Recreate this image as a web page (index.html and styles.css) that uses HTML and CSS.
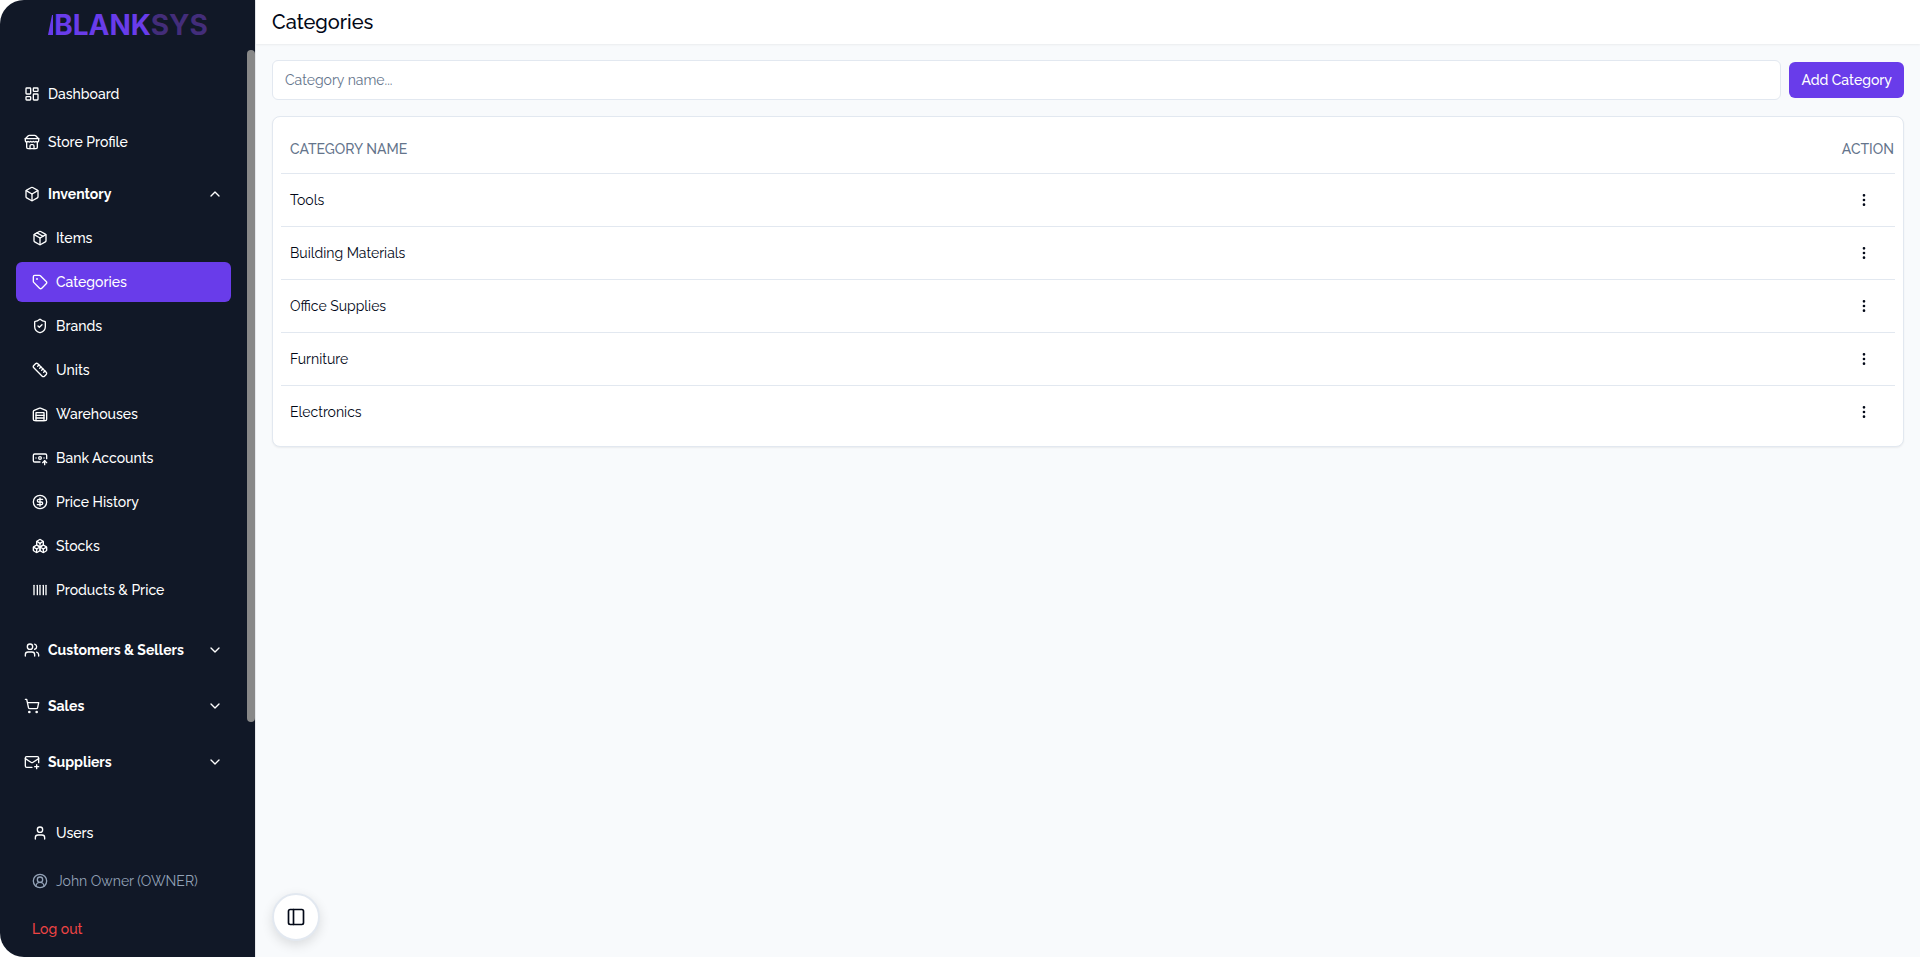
FILE: index.html
```html
<!DOCTYPE html>
<html lang="en">
<head>
    <meta charset="UTF-8">
    <meta name="viewport" content="width=device-width, initial-scale=1.0">
    <title>Categories</title>
    <link rel="stylesheet" href="styles.css">
</head>
<body>
    <div class="layout">
        <aside class="sidebar">
            <div class="logo">
                <svg class="logo-mark" viewBox="0 0 5 20"><path d="M0 20 4 0H5V20Z"/></svg>
                <span>BLANK<span class="logo-dim">SYS</span></span>
            </div>

            <nav class="nav">
                <div class="scroll-thumb"></div>
                <div class="nav-top">
                    <a class="nav-link" href="#">
                        <svg class="icon" viewBox="0 0 24 24"><rect width="7" height="9" x="3" y="3" rx="1"/><rect width="7" height="5" x="14" y="3" rx="1"/><rect width="7" height="9" x="14" y="12" rx="1"/><rect width="7" height="5" x="3" y="16" rx="1"/></svg>
                        Dashboard
                    </a>
                    <a class="nav-link" href="#">
                        <svg class="icon" viewBox="0 0 24 24"><path d="m2 7 4.41-4.41A2 2 0 0 1 7.83 2h8.34a2 2 0 0 1 1.42.59L22 7"/><path d="M4 12v8a2 2 0 0 0 2 2h12a2 2 0 0 0 2-2v-8"/><path d="M15 22v-4a2 2 0 0 0-2-2h-2a2 2 0 0 0-2 2v4"/><path d="M2 7h20"/><path d="M22 7v3a2 2 0 0 1-2 2a2.7 2.7 0 0 1-1.59-.63.7.7 0 0 0-.82 0A2.7 2.7 0 0 1 16 12a2.7 2.7 0 0 1-1.59-.63.7.7 0 0 0-.82 0A2.7 2.7 0 0 1 12 12a2.7 2.7 0 0 1-1.59-.63.7.7 0 0 0-.82 0A2.7 2.7 0 0 1 8 12a2.7 2.7 0 0 1-1.59-.63.7.7 0 0 0-.82 0A2.7 2.7 0 0 1 4 12a2 2 0 0 1-2-2V7"/></svg>
                        Store Profile
                    </a>
                </div>

                <div class="nav-group open">
                    <button class="group-btn" type="button" aria-expanded="true">
                        <svg class="icon" viewBox="0 0 24 24"><path d="M21 8a2 2 0 0 0-1-1.73l-7-4a2 2 0 0 0-2 0l-7 4A2 2 0 0 0 3 8v8a2 2 0 0 0 1 1.73l7 4a2 2 0 0 0 2 0l7-4A2 2 0 0 0 21 16Z"/><path d="m3.3 7 8.7 5 8.7-5"/><path d="M12 22V12"/></svg>
                        <span>Inventory</span>
                        <svg class="icon chevron" viewBox="0 0 24 24"><path d="m18 15-6-6-6 6"/></svg>
                    </button>
                    <div class="sub-nav">
                        <a class="nav-link" href="#">
                            <svg class="icon" viewBox="0 0 24 24"><path d="M11 21.73a2 2 0 0 0 2 0l7-4A2 2 0 0 0 21 16V8a2 2 0 0 0-1-1.73l-7-4a2 2 0 0 0-2 0l-7 4A2 2 0 0 0 3 8v8a2 2 0 0 0 1 1.73z"/><path d="M12 22V12"/><path d="m3.3 7 8.7 5 8.7-5"/><path d="m7.5 4.27 9 5.15"/></svg>
                            Items
                        </a>
                        <a class="nav-link active" href="#">
                            <svg class="icon" viewBox="0 0 24 24"><path d="M12.586 2.586A2 2 0 0 0 11.172 2H4a2 2 0 0 0-2 2v7.172a2 2 0 0 0 .586 1.414l8.704 8.704a2.426 2.426 0 0 0 3.42 0l6.58-6.58a2.426 2.426 0 0 0 0-3.42z"/><circle cx="7.5" cy="7.5" r=".5" fill="currentColor"/></svg>
                            Categories
                        </a>
                        <a class="nav-link" href="#">
                            <svg class="icon" viewBox="0 0 24 24"><path d="M20 13c0 5-3.5 7.5-7.66 8.95a1 1 0 0 1-.67-.01C7.5 20.5 4 18 4 13V6a1 1 0 0 1 1-1c2 0 4.5-1.2 6.24-2.72a1.17 1.17 0 0 1 1.52 0C14.51 3.81 17 5 19 5a1 1 0 0 1 1 1z"/><path d="m9 12 2 2 4-4"/></svg>
                            Brands
                        </a>
                        <a class="nav-link" href="#">
                            <svg class="icon" viewBox="0 0 24 24"><path d="M21.3 15.3a2.4 2.4 0 0 1 0 3.4l-2.6 2.6a2.4 2.4 0 0 1-3.4 0L2.7 8.7a2.41 2.41 0 0 1 0-3.4l2.6-2.6a2.41 2.41 0 0 1 3.4 0Z"/><path d="m14.5 12.5 2-2"/><path d="m11.5 9.5 2-2"/><path d="m8.5 6.5 2-2"/><path d="m17.5 15.5 2-2"/></svg>
                            Units
                        </a>
                        <a class="nav-link" href="#">
                            <svg class="icon" viewBox="0 0 24 24"><path d="M22 8.35V20a2 2 0 0 1-2 2H4a2 2 0 0 1-2-2V8.35A2 2 0 0 1 3.26 6.5l8-3.2a2 2 0 0 1 1.48 0l8 3.2A2 2 0 0 1 22 8.35Z"/><path d="M6 18h12"/><path d="M6 14h12"/><rect width="12" height="12" x="6" y="10"/></svg>
                            Warehouses
                        </a>
                        <a class="nav-link" href="#">
                            <svg class="icon" viewBox="0 0 24 24"><path d="M12 18H4a2 2 0 0 1-2-2V8a2 2 0 0 1 2-2h16a2 2 0 0 1 2 2v5"/><path d="M18 12h.01"/><path d="M19 22v-6"/><path d="m22 19-3-3-3 3"/><path d="M6 12h.01"/><circle cx="12" cy="12" r="2"/></svg>
                            Bank Accounts
                        </a>
                        <a class="nav-link" href="#">
                            <svg class="icon" viewBox="0 0 24 24"><circle cx="12" cy="12" r="10"/><path d="M16 8h-6a2 2 0 1 0 0 4h4a2 2 0 1 1 0 4H8"/><path d="M12 18V6"/></svg>
                            Price History
                        </a>
                        <a class="nav-link" href="#">
                            <svg class="icon" viewBox="0 0 24 24"><path d="M2.97 12.92A2 2 0 0 0 2 14.63v3.24a2 2 0 0 0 .97 1.71l3 1.8a2 2 0 0 0 2.06 0L12 19v-5.5l-5-3-4.03 2.42Z"/><path d="m7 16.5-4.74-2.85"/><path d="m7 16.5 5-3"/><path d="M7 16.5v5.17"/><path d="M12 13.5V19l3.97 2.38a2 2 0 0 0 2.06 0l3-1.8a2 2 0 0 0 .97-1.71v-3.24a2 2 0 0 0-.97-1.71L17 10.5l-5 3Z"/><path d="m17 16.5-5-3"/><path d="m17 16.5 4.74-2.85"/><path d="M17 16.5v5.17"/><path d="M7.97 4.42A2 2 0 0 0 7 6.13v4.37l5 3 5-3V6.13a2 2 0 0 0-.97-1.71l-3-1.8a2 2 0 0 0-2.06 0l-3 1.8Z"/><path d="M12 8 7.26 5.15"/><path d="m12 8 4.74-2.85"/><path d="M12 13.5V8"/></svg>
                            Stocks
                        </a>
                        <a class="nav-link" href="#">
                            <svg class="icon" viewBox="0 0 24 24"><path d="M3 5v14"/><path d="M8 5v14"/><path d="M12 5v14"/><path d="M17 5v14"/><path d="M21 5v14"/></svg>
                            Products &amp; Price
                        </a>
                    </div>
                </div>

                <div class="nav-group">
                    <button class="group-btn" type="button" aria-expanded="false">
                        <svg class="icon" viewBox="0 0 24 24"><path d="M16 21v-2a4 4 0 0 0-4-4H6a4 4 0 0 0-4 4v2"/><circle cx="9" cy="7" r="4"/><path d="M22 21v-2a4 4 0 0 0-3-3.87"/><path d="M16 3.13a4 4 0 0 1 0 7.75"/></svg>
                        <span>Customers &amp; Sellers</span>
                        <svg class="icon chevron" viewBox="0 0 24 24"><path d="m6 9 6 6 6-6"/></svg>
                    </button>
                </div>
                <div class="nav-group">
                    <button class="group-btn" type="button" aria-expanded="false">
                        <svg class="icon" viewBox="0 0 24 24"><circle cx="8" cy="21" r="1"/><circle cx="19" cy="21" r="1"/><path d="M2.05 2.05h2l2.66 12.42a2 2 0 0 0 2 1.58h9.78a2 2 0 0 0 1.95-1.57l1.65-7.43H5.12"/></svg>
                        <span>Sales</span>
                        <svg class="icon chevron" viewBox="0 0 24 24"><path d="m6 9 6 6 6-6"/></svg>
                    </button>
                </div>
                <div class="nav-group">
                    <button class="group-btn" type="button" aria-expanded="false">
                        <svg class="icon" viewBox="0 0 24 24"><path d="M22 13V6a2 2 0 0 0-2-2H4a2 2 0 0 0-2 2v12c0 1.1.9 2 2 2h8"/><path d="m22 7-8.97 5.7a1.94 1.94 0 0 1-2.06 0L2 7"/><path d="M19 16v6"/><path d="M16 19h6"/></svg>
                        <span>Suppliers</span>
                        <svg class="icon chevron" viewBox="0 0 24 24"><path d="m6 9 6 6 6-6"/></svg>
                    </button>
                </div>
            </nav>

            <div class="sidebar-footer">
                <a class="nav-link" href="#">
                    <svg class="icon" viewBox="0 0 24 24"><path d="M19 21v-2a4 4 0 0 0-4-4H9a4 4 0 0 0-4 4v2"/><circle cx="12" cy="7" r="4"/></svg>
                    Users
                </a>
                <div class="nav-link account">
                    <svg class="icon" viewBox="0 0 24 24"><path d="M18 20a6 6 0 0 0-12 0"/><circle cx="12" cy="10" r="4"/><circle cx="12" cy="12" r="10"/></svg>
                    John Owner (OWNER)
                </div>
                <button class="nav-link logout" type="button">Log out</button>
            </div>
        </aside>

        <div class="page">
            <header class="page-header">
                <h1>Categories</h1>
            </header>

            <main class="content">
                <form class="add-form">
                    <input type="text" id="categoryName" aria-label="Category name" placeholder="Category name...">
                    <button class="btn" type="button">Add Category</button>
                </form>

                <div class="card">
                    <table>
                        <thead>
                            <tr>
                                <th>CATEGORY NAME</th>
                                <th class="action-head">ACTION</th>
                            </tr>
                        </thead>
                        <tbody>
                            <tr>
                                <td>Tools</td>
                                <td class="action"><button class="menu-btn" type="button" aria-label="Actions for Tools"><svg class="icon" viewBox="0 0 24 24"><circle cx="12" cy="12" r="1"/><circle cx="12" cy="5" r="1"/><circle cx="12" cy="19" r="1"/></svg></button></td>
                            </tr>
                            <tr>
                                <td>Building Materials</td>
                                <td class="action"><button class="menu-btn" type="button" aria-label="Actions for Building Materials"><svg class="icon" viewBox="0 0 24 24"><circle cx="12" cy="12" r="1"/><circle cx="12" cy="5" r="1"/><circle cx="12" cy="19" r="1"/></svg></button></td>
                            </tr>
                            <tr>
                                <td>Office Supplies</td>
                                <td class="action"><button class="menu-btn" type="button" aria-label="Actions for Office Supplies"><svg class="icon" viewBox="0 0 24 24"><circle cx="12" cy="12" r="1"/><circle cx="12" cy="5" r="1"/><circle cx="12" cy="19" r="1"/></svg></button></td>
                            </tr>
                            <tr>
                                <td>Furniture</td>
                                <td class="action"><button class="menu-btn" type="button" aria-label="Actions for Furniture"><svg class="icon" viewBox="0 0 24 24"><circle cx="12" cy="12" r="1"/><circle cx="12" cy="5" r="1"/><circle cx="12" cy="19" r="1"/></svg></button></td>
                            </tr>
                            <tr>
                                <td>Electronics</td>
                                <td class="action"><button class="menu-btn" type="button" aria-label="Actions for Electronics"><svg class="icon" viewBox="0 0 24 24"><circle cx="12" cy="12" r="1"/><circle cx="12" cy="5" r="1"/><circle cx="12" cy="19" r="1"/></svg></button></td>
                            </tr>
                        </tbody>
                    </table>
                </div>

                <button class="sidebar-toggle" type="button" aria-label="Toggle sidebar">
                    <svg class="icon" viewBox="0 0 24 24"><rect width="18" height="18" x="3" y="3" rx="2"/><path d="M9 3v18"/></svg>
                </button>
            </main>
        </div>
    </div>
</body>
</html>
```
FILE: styles.css
```css
* {
    margin: 0;
    padding: 0;
    box-sizing: border-box;
}

body {
    font-family: Raleway, Lato, sans-serif;
    font-size: 14px;
    line-height: 20px;
    color: #020817;
    background: white;
}

button, input {
    font: inherit;
    color: inherit;
}

button {
    border: none;
    background: none;
    cursor: pointer;
}

a {
    color: inherit;
    text-decoration: none;
}

.icon {
    width: 16px;
    height: 16px;
    flex-shrink: 0;
    fill: none;
    stroke: currentColor;
    stroke-width: 2;
    stroke-linecap: round;
    stroke-linejoin: round;
}

.layout {
    display: flex;
    height: 100vh;
}

/* Sidebar */
.sidebar {
    width: 255px;
    flex-shrink: 0;
    display: flex;
    flex-direction: column;
    background: #111827;
    color: white;
    border-radius: 24px 0 0 24px;
}

.logo {
    height: 50px;
    flex-shrink: 0;
    display: flex;
    align-items: center;
    justify-content: center;
    gap: 1px;
    padding-left: 1px;
    font-family: Inter, sans-serif;
    font-size: 28px;
    font-weight: 700;
    color: #693cea;
}

.logo-mark {
    width: 5px;
    height: 20px;
    fill: #693cea;
}

.logo-dim {
    color: #432d7a;
}

.nav {
    position: relative;
    flex: 1;
    min-height: 0;
    padding: 24px 24px 0 16px;
    overflow: hidden;
}

.scroll-thumb {
    position: absolute;
    top: 0;
    right: 0;
    width: 8px;
    height: 89%;
    border-radius: 4px;
    background: #888;
}

.nav-top {
    display: flex;
    flex-direction: column;
    gap: 8px;
    margin-bottom: 12px;
}

.nav-link, .group-btn {
    display: flex;
    align-items: center;
    gap: 8px;
    width: 100%;
    height: 40px;
    padding: 0 8px;
    border-radius: 6px;
    font-weight: 500;
    text-align: left;
}

.nav-group {
    margin-bottom: 16px;
}

.nav-group.open {
    margin-bottom: 20px;
}

.group-btn {
    font-weight: 700;
}

.chevron {
    margin-left: auto;
}

.sub-nav {
    display: flex;
    flex-direction: column;
    gap: 4px;
    margin-top: 4px;
}

.sub-nav .nav-link, .sidebar-footer .nav-link {
    padding: 0 16px;
}

.nav-link.active {
    background: #693cea;
}

.sidebar-footer {
    display: flex;
    flex-direction: column;
    gap: 8px;
    padding: 8px 16px;
}

.sidebar-footer .account {
    color: #94a3b8;
    font-weight: 400;
}

.logout {
    color: #ef4444;
}

/* Page */
.page {
    flex: 1;
    min-width: 0;
    background: #f8fafc;
    border-left: 1px solid #e5e7eb;
}

.page-header {
    padding: 8px 16px;
    background: white;
    box-shadow: 0 1px 2px rgba(0,0,0,0.06);
}

h1 {
    font-size: 20px;
    line-height: 28px;
    font-weight: 500;
}

.content {
    padding: 16px;
}

.add-form {
    display: flex;
    align-items: center;
    gap: 8px;
    margin-bottom: 16px;
}

.add-form input {
    flex: 1;
    min-width: 0;
    height: 40px;
    padding: 0 12px;
    border: 1px solid #e2e8f0;
    border-radius: 6px;
    background: white;
}

.add-form input::placeholder {
    color: #64748b;
}

.btn {
    height: 36px;
    padding: 0 12px;
    border-radius: 6px;
    background: #693cea;
    color: white;
    font-weight: 500;
}

.card {
    padding: 8px;
    background: white;
    border: 1px solid #e2e8f0;
    border-radius: 8px;
    box-shadow: 0 1px 2px rgba(0,0,0,0.06);
}

table {
    width: 100%;
    border-collapse: collapse;
}

th {
    height: 48px;
    padding: 0 9px;
    color: #64748b;
    font-weight: 500;
    text-align: left;
}

td {
    height: 53px;
    padding: 8px 9px;
}

tr {
    border-bottom: 1px solid #e2e8f0;
}

tbody tr:last-child {
    border-bottom: none;
}

.action-head {
    width: 62px;
    padding: 0 1px 0 8px;
    text-align: right;
}

.action {
    text-align: center;
}

.menu-btn {
    display: block;
    width: 36px;
    height: 36px;
    margin: 0 auto;
    border-radius: 6px;
}

.menu-btn .icon {
    display: block;
    margin: 0 auto;
}

.sidebar-toggle {
    position: fixed;
    left: 272px;
    bottom: 16px;
    display: flex;
    align-items: center;
    justify-content: center;
    width: 48px;
    height: 48px;
    border: 2px solid #e2e8f0;
    border-radius: 50%;
    background: white;
    box-shadow: 0 4px 12px rgba(0,0,0,0.12);
}

.sidebar-toggle .icon {
    width: 20px;
    height: 20px;
}
```
